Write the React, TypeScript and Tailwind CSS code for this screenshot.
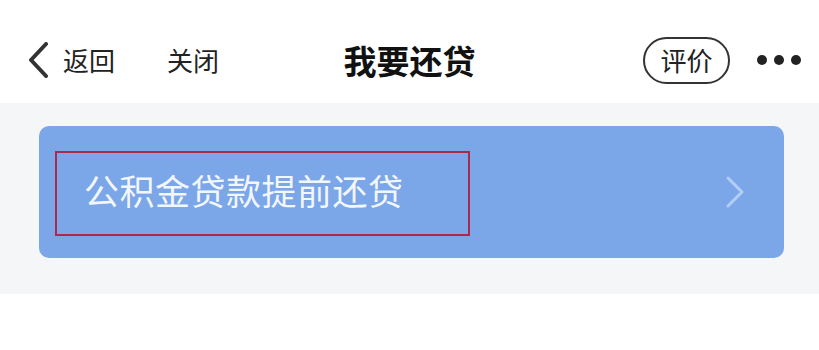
// header + single loan option card
const font = { fontFamily: '"Noto Sans CJK SC", "Noto Sans", sans-serif' };

function BackChevron() {
  return (
    <svg width="22" height="36" viewBox="0 0 22 36" fill="none">
      <path d="M19 2 L4 18 L19 34" stroke="#333" strokeWidth="4" strokeLinecap="round" strokeLinejoin="round" />
    </svg>
  );
}

function RightChevron() {
  return (
    <svg width="19" height="32" viewBox="0 0 19 32" fill="none">
      <path d="M2 2 L16 16 L2 30" stroke="#b3cef4" strokeWidth="3" strokeLinecap="round" strokeLinejoin="round" />
    </svg>
  );
}

export default function App() {
  return (
    <div className="w-[819px] h-[350px] bg-white overflow-hidden" style={font}>
      <header className="h-[103px] pt-[17px] grid grid-cols-[1fr_auto_1fr] items-center bg-white">
        <div className="flex items-center pl-[27px]">
          <BackChevron />
          <span className="ml-[14px] text-[26px] leading-none text-[#222]">返回</span>
          <span className="ml-[52px] text-[26px] leading-none text-[#222]">关闭</span>
        </div>
        <h1 className="text-[33px] leading-none font-bold text-[#111]">我要还贷</h1>
        <div className="flex items-center justify-end pr-[18px]">
          <span className="h-[47px] w-[87px] rounded-full border-2 border-[#333] flex items-center justify-center text-[26px] leading-none text-[#222]">
            评价
          </span>
          <div className="ml-[27px] flex items-center gap-[7px]">
            <span className="w-[10px] h-[10px] rounded-full bg-[#222]" />
            <span className="w-[10px] h-[10px] rounded-full bg-[#222]" />
            <span className="w-[10px] h-[10px] rounded-full bg-[#222]" />
          </div>
        </div>
      </header>

      <section className="bg-[#f5f6f8] pt-[23px] pb-[36px] pl-[39px] pr-[35px]">
        <div className="h-[132px] rounded-[10px] bg-[#7ba6e7] flex items-center justify-between pl-[16px] pr-[39px]">
          <div className="w-[415px] h-[85px] mt-[2px] pb-[7px] border-2 border-[#a82a4c] flex items-center pl-[27px]">
            <span className="text-[35px] leading-none text-[#f2f6fd] tracking-[0.5px]">公积金贷款提前还贷</span>
          </div>
          <RightChevron />
        </div>
      </section>
    </div>
  );
}
